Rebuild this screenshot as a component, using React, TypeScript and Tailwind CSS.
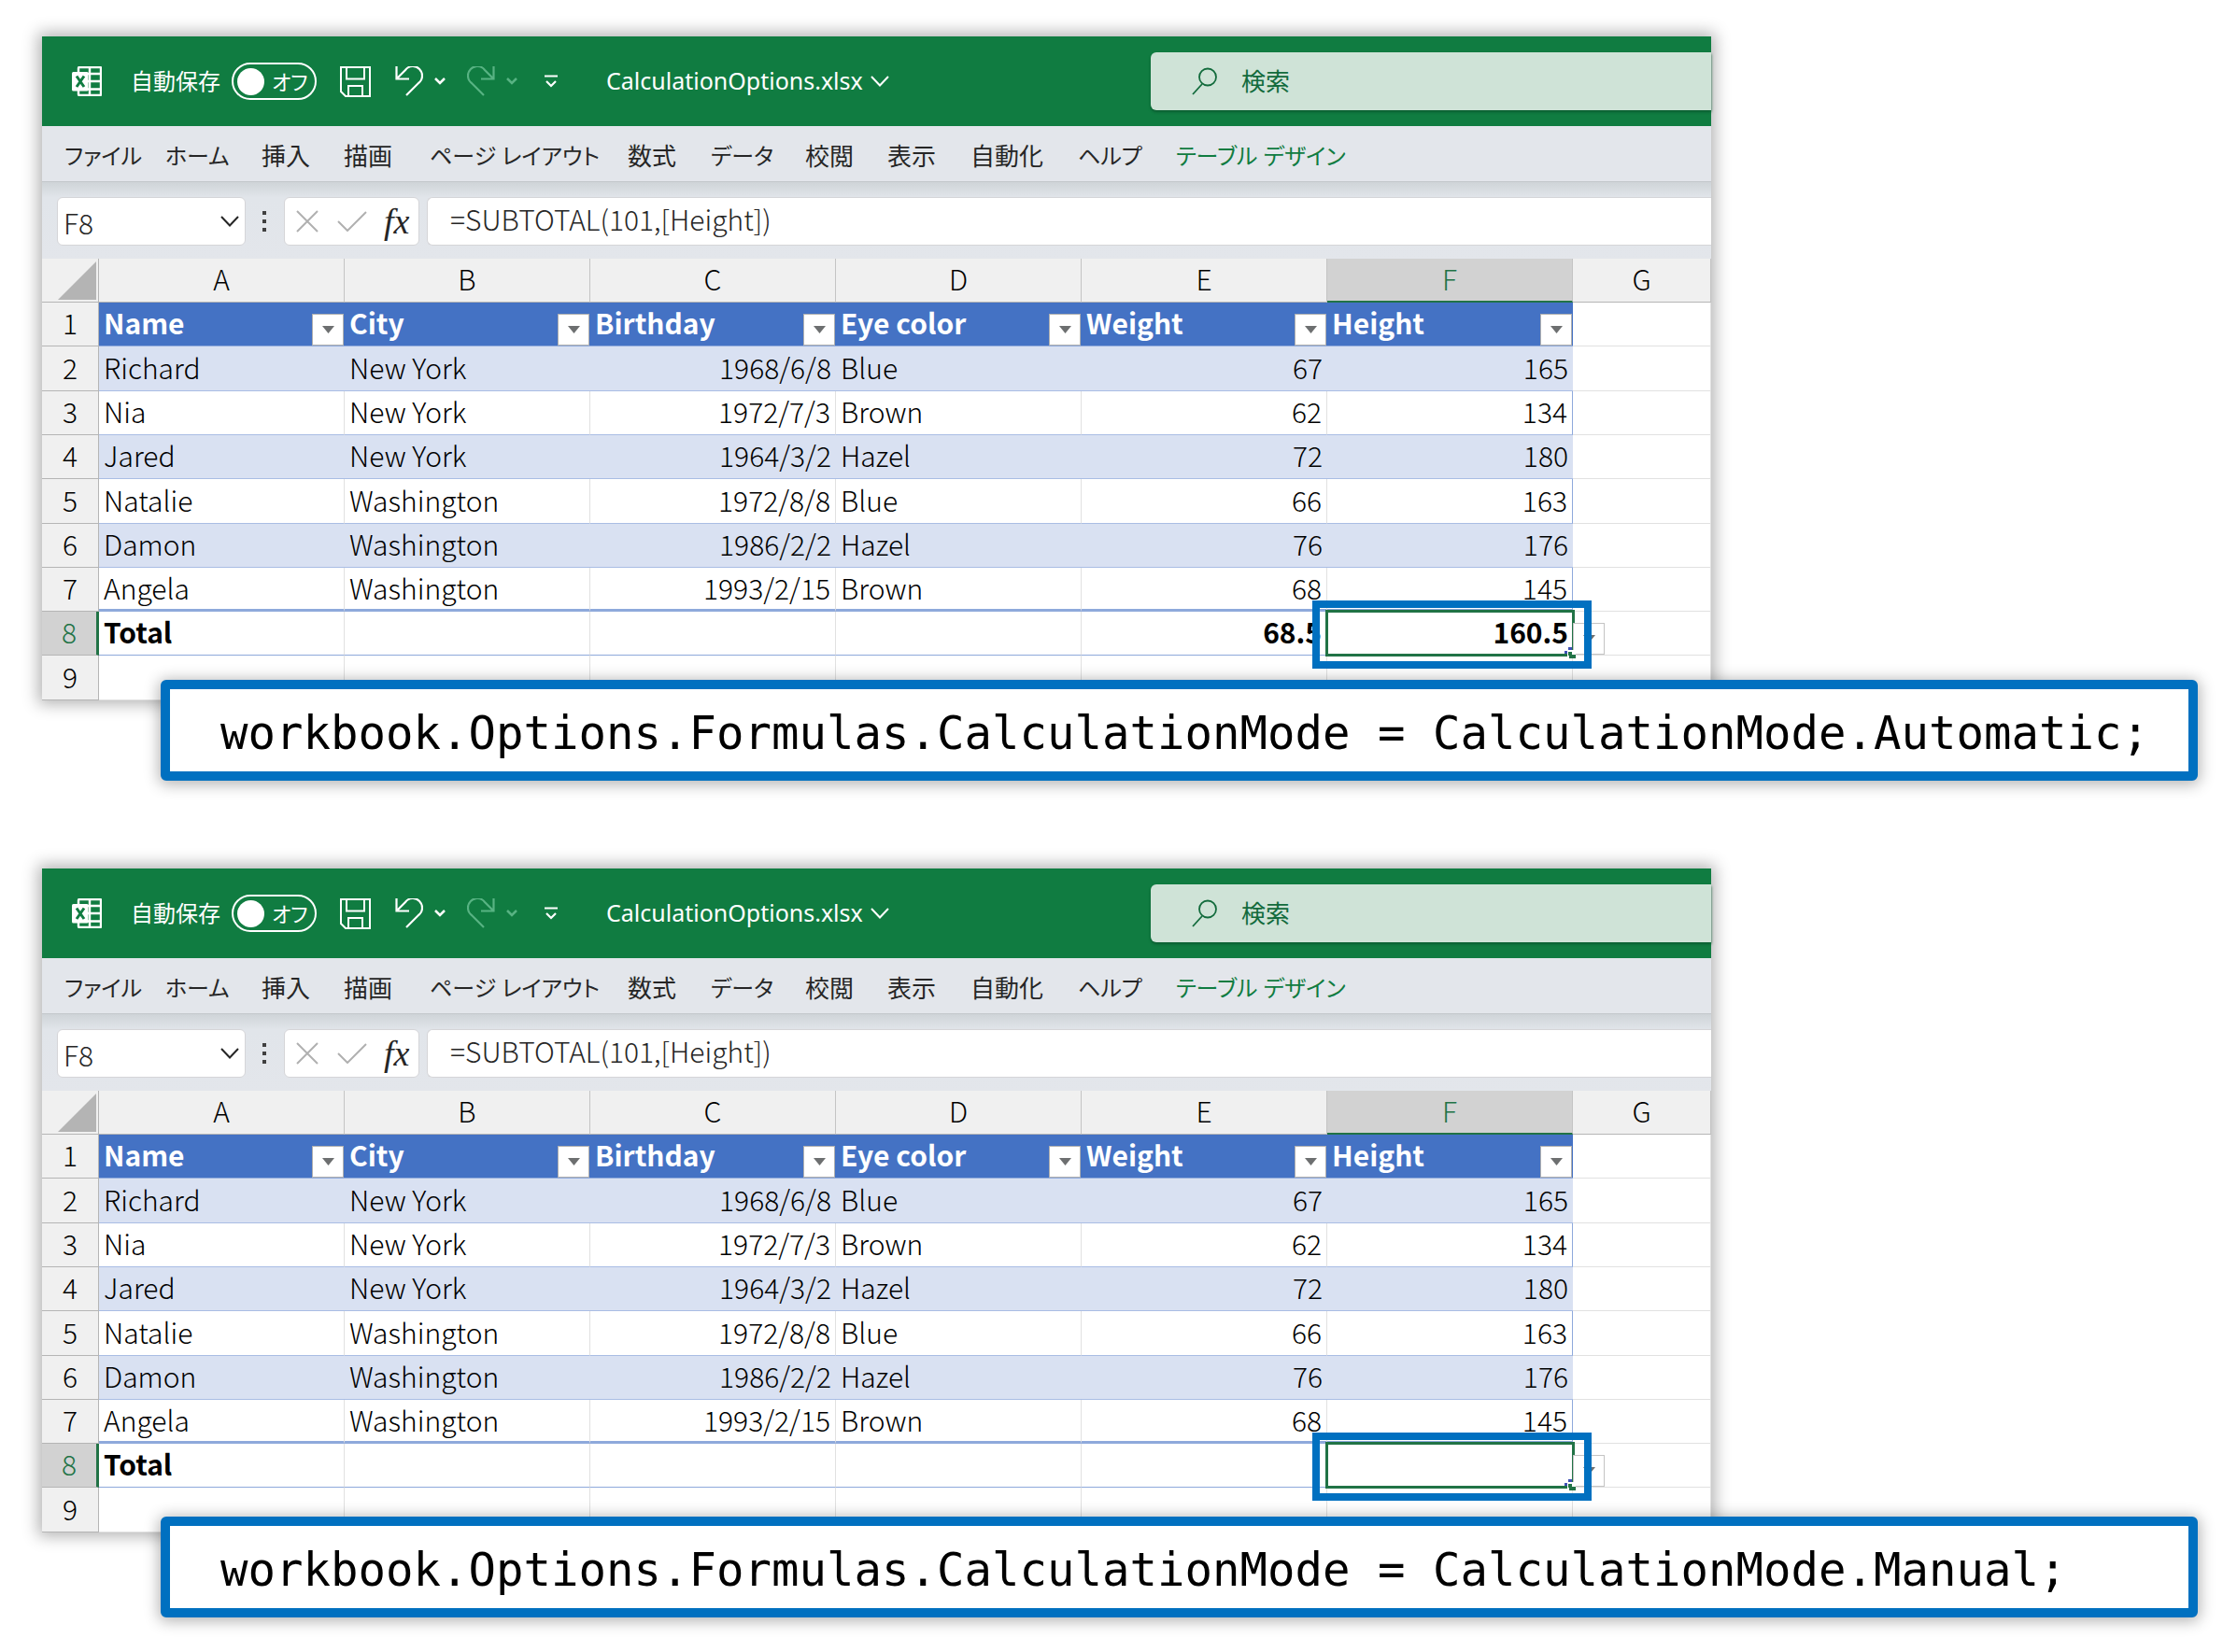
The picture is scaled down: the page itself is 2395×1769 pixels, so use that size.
import React from "react";

const uiFont = "font-['Noto_Sans','Noto_Sans_CJK_JP',sans-serif]";
const cellFont = "font-['Noto_Sans_CJK_JP',sans-serif]";

const tabs = [
  { label: "ファイル", style: "w-[108px] text-2xl text-[#262626]" },
  { label: "ホーム", style: "w-[103px] text-2xl text-[#262626]" },
  { label: "挿入", style: "w-[88px] text-[26px] text-[#262626]" },
  { label: "描画", style: "w-[92px] text-[26px] text-[#262626]" },
  { label: "ページ レイアウト", style: "w-[212px] text-2xl text-[#262626]" },
  { label: "数式", style: "w-[89px] text-[26px] text-[#262626]" },
  { label: "データ", style: "w-[101px] text-2xl text-[#262626]" },
  { label: "校閲", style: "w-[88px] text-[26px] text-[#262626]" },
  { label: "表示", style: "w-[89px] text-[26px] text-[#262626]" },
  { label: "自動化", style: "w-[115px] text-[26px] text-[#262626]" },
  { label: "ヘルプ", style: "w-[105px] text-2xl text-[#262626]" },
  { label: "テーブル デザイン", style: "w-[200px] text-2xl text-[#107c41]" },
];

const columns = ["A", "B", "C", "D", "E", "F", "G"];
const headings = ["Name", "City", "Birthday", "Eye color", "Weight", "Height"];
const people = [
  ["Richard", "New York", "1968/6/8", "Blue", "67", "165"],
  ["Nia", "New York", "1972/7/3", "Brown", "62", "134"],
  ["Jared", "New York", "1964/3/2", "Hazel", "72", "180"],
  ["Natalie", "Washington", "1972/8/8", "Blue", "66", "163"],
  ["Damon", "Washington", "1986/2/2", "Hazel", "76", "176"],
  ["Angela", "Washington", "1993/2/15", "Brown", "68", "145"],
];

function Chevron({ className }: { className: string }) {
  return (
    <svg viewBox="0 0 20 12" className={className} fill="none" stroke="currentColor" strokeWidth="2" aria-hidden="true">
      <path d="M1 1l9 9.5L19 1" />
    </svg>
  );
}

function SmallChevron() {
  return (
    <svg viewBox="0 0 12 8" className="h-2 w-3" fill="none" stroke="currentColor" strokeWidth="2.5" aria-hidden="true">
      <path d="M1 1l5 5L11 1" />
    </svg>
  );
}

function ExcelLogo() {
  return (
    <svg viewBox="0 0 32 32" className="size-8 shrink-0" role="img" aria-label="Excel">
      <path
        d="M8.500 1h21.500a1 1 0 0 1 1 1v28a1 1 0 0 1-1 1H8a1 1 0 0 1-1-1V2a1 1 0 0 1 1-1zM19 1v30M7 8h24M7 16h24M7 24.500h24"
        fill="none"
        stroke="#fff"
        strokeWidth="2.400"
      />
      <rect x="0" y="6" width="17.500" height="20.500" rx="1.500" fill="#fff" />
      <path d="M5 10.500l8 11.500M13 10.500L5 22" fill="none" stroke="#107c41" strokeWidth="3" />
    </svg>
  );
}

function SaveIcon() {
  return (
    <svg viewBox="0 0 33 33" className="size-[33px]" fill="none" stroke="currentColor" strokeWidth="2" aria-hidden="true">
      <path d="M1 1h31v31H6l-5-5zM7 1v12.500h19V1M9 32V21h15v11" />
    </svg>
  );
}

function UndoIcon({ mirrored }: { mirrored?: boolean }) {
  return (
    <svg viewBox="0 0 30 32" className="h-8 w-[30px]" fill="none" stroke="currentColor" strokeWidth="2.200" aria-hidden="true">
      {mirrored ? (
        <path d="M28.500 0v13.500H15M28.500 13.500L19 4A10 10 0 1 0 5 18L18 31" />
      ) : (
        <path d="M1.500 0v13.500H15M1.500 13.500L11 4A10 10 0 1 1 25 18L12 31" />
      )}
    </svg>
  );
}

function TitleBar({ id }: { id: string }) {
  return (
    <header className={`flex h-24 items-center bg-[#107c41] pl-8 text-white ${uiFont}`}>
      <ExcelLogo />
      <label
        htmlFor={`${id}-autosave`}
        className="ml-[31px] flex shrink-0 items-center gap-3 text-2xl leading-10 whitespace-nowrap"
      >
        自動保存
        <input id={`${id}-autosave`} type="checkbox" role="switch" className="sr-only" />
        <span className="flex h-10 w-[91px] items-center gap-2 rounded-full border-2 border-white pl-1">
          <span className="size-[29px] rounded-full bg-white" />
          <span className="text-[22px] [font-feature-settings:'palt']">オフ</span>
        </span>
      </label>
      <button type="button" aria-label="上書き保存" className="ml-[25px]">
        <SaveIcon />
      </button>
      <button type="button" aria-label="元に戻す" className="ml-[26px] flex items-center gap-3">
        <UndoIcon />
        <SmallChevron />
      </button>
      <button type="button" aria-label="やり直し" className="ml-[23px] flex items-center gap-3 text-[#58b383]">
        <UndoIcon mirrored />
        <SmallChevron />
      </button>
      <button type="button" aria-label="クイック アクセス ツール バーのカスタマイズ" className="ml-7">
        <svg viewBox="0 0 16 14" className="h-3.5 w-4" fill="none" stroke="currentColor" strokeWidth="2.200" aria-hidden="true">
          <path d="M1 1.500h14M3 7l5 5 5-5" />
        </svg>
      </button>
      <button type="button" className="ml-[51px] flex items-center gap-2 text-[25px] whitespace-nowrap">
        CalculationOptions.xlsx
        <Chevron className="h-3 w-5" />
      </button>
      <label className="ml-auto flex h-[62px] w-[600px] items-center gap-[26px] rounded-l-md bg-[#cfe3d7] pl-11 text-[#126b3c] shadow-[0_2px_3px_#0b5c30]">
        <svg viewBox="0 0 27 30" className="h-[30px] w-[27px] shrink-0" fill="none" stroke="currentColor" strokeWidth="1.800" aria-hidden="true">
          <circle cx="17" cy="10.500" r="9" />
          <path d="M11 18L1 29" />
        </svg>
        <input
          type="search"
          aria-label="検索"
          placeholder="検索"
          className="min-w-0 flex-1 bg-transparent text-[26px] leading-10 placeholder:text-[#126b3c] placeholder:opacity-100"
        />
      </label>
    </header>
  );
}

function RibbonTabs() {
  return (
    <nav className={`flex h-[60px] items-center border-b border-[#c3c7cb] bg-[#e3e6eb] pt-1 pl-6 ${uiFont}`}>
      {tabs.map((tab) => (
        <button
          key={tab.label}
          type="button"
          className={`${tab.style} text-left leading-10 whitespace-nowrap [font-feature-settings:'palt']`}
        >
          {tab.label}
        </button>
      ))}
    </nav>
  );
}

function FormulaBar() {
  return (
    <div className={`flex h-[82px] items-center bg-linear-to-b from-[#cfd4d8] via-[#e1e5ea] via-20% to-[#e3e6eb] pt-0.5 pl-4 ${cellFont}`}>
      <div className="flex h-[52px] w-[202px] items-center rounded-md border border-[#d5d5d8] bg-white pr-1.5 pl-1.5 text-[#262626]">
        <input
          aria-label="名前ボックス"
          defaultValue="F8"
          className="min-w-0 flex-1 pt-0.5 text-[30px] leading-10 font-light"
        />
        <button type="button" aria-label="名前の一覧">
          <Chevron className="h-3 w-5" />
        </button>
      </div>
      <svg viewBox="0 0 4 22" className="ml-[18px] h-[22px] w-1" fill="#404040" aria-hidden="true">
        <path d="M0 0h4v4H0zM0 9h4v4H0zM0 18h4v4H0z" />
      </svg>
      <div className="ml-[19px] flex h-[52px] w-[145px] items-center rounded-md border border-[#d5d5d8] bg-white pl-3">
        <button type="button" aria-label="キャンセル">
          <svg viewBox="0 0 24 24" className="size-6" fill="none" stroke="#b0b0b0" strokeWidth="2" aria-hidden="true">
            <path d="M1 1l22 22M23 1L1 23" />
          </svg>
        </button>
        <button type="button" aria-label="入力" className="ml-5">
          <svg viewBox="0 0 32 22" className="h-[22px] w-8" fill="none" stroke="#b0b0b0" strokeWidth="2" aria-hidden="true">
            <path d="M1 11l10 10L31 1" />
          </svg>
        </button>
        <button
          type="button"
          aria-label="関数の挿入"
          className="ml-[18px] font-['Liberation_Serif',serif] text-[38px] leading-10 text-[#262626] italic"
        >
          fx
        </button>
      </div>
      <input
        aria-label="数式バー"
        defaultValue="=SUBTOTAL(101,[Height])"
        className="ml-2 h-[52px] min-w-0 flex-1 rounded-l-md border border-r-0 border-[#d5d5d8] bg-white pb-1.5 pl-6 text-[30px] font-light text-[#262626]"
      />
    </div>
  );
}

function FilterArrow() {
  return (
    <svg viewBox="0 0 13 8" className="h-2 w-[13px]" fill="#6d6f70" aria-hidden="true">
      <path d="M0 0h13L6.500 8z" />
    </svg>
  );
}

function RowHeader({ row, selected }: { row: number; selected?: boolean }) {
  return (
    <th
      scope="row"
      className={
        selected
          ? "border-r-3 border-b border-r-[#217346] border-b-[#b5b5b5] bg-[#d2d2d2] pt-0 pb-1 font-light text-[#217346]"
          : "border-r border-b border-[#b5b5b5] bg-[#f0f0f0] pt-0 pb-1 font-light"
      }
    >
      {row}
    </th>
  );
}

function Grid({ weight, height }: { weight: string; height: string }) {
  return (
    <table
      className={`w-full table-fixed border-separate border-spacing-0 bg-white text-[30px] leading-10 text-black ${cellFont}`}
    >
      <colgroup>
        <col className="w-[61px]" />
        {headings.map((heading) => (
          <col key={heading} className="w-[263px]" />
        ))}
        <col />
      </colgroup>
      <thead>
        <tr className="h-[47px]">
          <th aria-label="すべて選択" className="border-r border-b border-[#b5b5b5] bg-[#f0f0f0] pr-0.5">
            <svg viewBox="0 0 41 41" className="ml-auto size-[41px]" fill="#b4b4b4" aria-hidden="true">
              <path d="M41 0v41H0z" />
            </svg>
          </th>
          {columns.map((column) => (
            <th
              key={column}
              scope="col"
              className={
                column === "F"
                  ? "border-r border-b-2 border-r-[#c4c4c4] border-b-[#217346] bg-[#d2d2d2] pt-0 pb-1 font-light text-[#217346]"
                  : "border-r border-b border-r-[#c4c4c4] border-b-[#b5b5b5] bg-[#f0f0f0] pt-0 pb-1 font-light"
              }
            >
              {column}
            </th>
          ))}
        </tr>
      </thead>
      <tbody>
        <tr className="h-[47px]">
          <RowHeader row={1} />
          {headings.map((heading) => (
            <th key={heading} scope="col" className="border-b border-[#8ea9db] bg-[#4472c4] p-0 text-left font-bold text-white">
              <div className="flex h-[46px] items-end justify-between pr-px pl-[5px]">
                <span className="self-center pb-1 leading-10">{heading}</span>
                <button
                  type="button"
                  aria-label={`${heading} のフィルター`}
                  className="flex h-[34px] w-[34px] items-center justify-center border border-[#b0b0b0] bg-white"
                >
                  <FilterArrow />
                </button>
              </div>
            </th>
          ))}
          <td className="border-r border-b border-[#e1e1e1]" />
        </tr>
        {people.map((person, index) => (
          <tr key={person[0]} className={index % 3 === 0 ? "h-12" : "h-[47px]"}>
            <RowHeader row={index + 2} />
            {person.map((value, column) => (
              <td
                key={column}
                className={`px-[5px] pt-0 font-light ${column === 2 || column > 3 ? "text-right" : "text-left"} ${
                  index % 2 === 0 ? "bg-[#d9e1f2]" : column === 5 ? "border-r border-r-[#8ea9db]" : "border-r border-r-[#e1e1e1]"
                } ${index === 5 ? "border-b-3 border-b-[#8ea9db] pb-0.5" : "border-b border-b-[#a9bde4] pb-1"}`}
              >
                {value}
              </td>
            ))}
            <td className="border-r border-b border-[#e1e1e1]" />
          </tr>
        ))}
        <tr className="h-[47px] font-bold">
          <RowHeader row={8} selected />
          <td className="border-r border-b border-r-[#e1e1e1] border-b-[#8ea9db] px-[5px] pt-0 pb-1">Total</td>
          <td className="border-r border-b border-r-[#e1e1e1] border-b-[#8ea9db]" />
          <td className="border-r border-b border-r-[#e1e1e1] border-b-[#8ea9db]" />
          <td className="border-r border-b border-r-[#e1e1e1] border-b-[#8ea9db]" />
          <td className="border-r border-b border-r-[#e1e1e1] border-b-[#8ea9db] px-[5px] pt-0 pb-1 text-right">{weight}</td>
          <td aria-selected="true" className="relative border-b border-b-[#8ea9db] px-[5px] pt-0 pb-1 text-right">
            {height}
            <span className="absolute -inset-0.5 border-3 border-[#217346]" />
            <button
              type="button"
              aria-label="集計方法の選択"
              className="absolute top-3 left-full flex h-[34px] w-[34px] items-center justify-center border border-[#c4c4c4] bg-white"
            >
              <FilterArrow />
            </button>
            <svg viewBox="0 0 12 12" className="absolute -right-[3px] -bottom-1 size-3" aria-hidden="true">
              <path d="M3 3h9v9H3z" fill="#fff" />
              <path d="M4 5h4v3h4v4H5V9H4z" fill="#217346" />
              <path d="M4 0h4v3H4zM0 4h3v3H0z" fill="#3f51b5" />
            </svg>
            <span className="absolute -top-3 -right-5 -bottom-[15px] -left-4 border-8 border-[#0070c0]" />
          </td>
          <td className="border-r border-b border-[#e1e1e1]" />
        </tr>
        <tr className="h-12">
          <RowHeader row={9} />
          {columns.map((column) => (
            <td key={column} className="border-r border-b border-[#e1e1e1]" />
          ))}
        </tr>
      </tbody>
    </table>
  );
}

function Example({
  id,
  weight,
  height,
  code,
  overlap,
}: {
  id: string;
  weight: string;
  height: string;
  code: string;
  overlap: string;
}) {
  return (
    <section className="pr-[42px] pl-[45px]">
      <div className="mr-[521px] shadow-[0_0_16px_4px_rgba(0,0,0,0.3)]">
        <TitleBar id={id} />
        <RibbonTabs />
        <FormulaBar />
        <Grid weight={weight} height={height} />
      </div>
      <div
        className={`relative ml-[127px] flex h-[108px] items-center rounded-md border-10 border-[#0070c0] bg-white pt-2 pl-[54px] shadow-[0_2px_16px_2px_rgba(0,0,0,0.3)] ${overlap}`}
      >
        <code className="font-['DejaVu_Sans_Mono',monospace] text-[49px] leading-[60px] whitespace-pre text-black">{code}</code>
      </div>
    </section>
  );
}

export default function App() {
  return (
    <main className="flex flex-col gap-[94px] bg-white pt-[39px] pb-9">
      <Example
        id="automatic"
        weight="68.5"
        height="160.5"
        code="workbook.Options.Formulas.CalculationMode = CalculationMode.Automatic;"
        overlap="-mt-[22px]"
      />
      <Example
        id="manual"
        weight=""
        height=""
        code="workbook.Options.Formulas.CalculationMode = CalculationMode.Manual;"
        overlap="-mt-[17px]"
      />
    </main>
  );
}
